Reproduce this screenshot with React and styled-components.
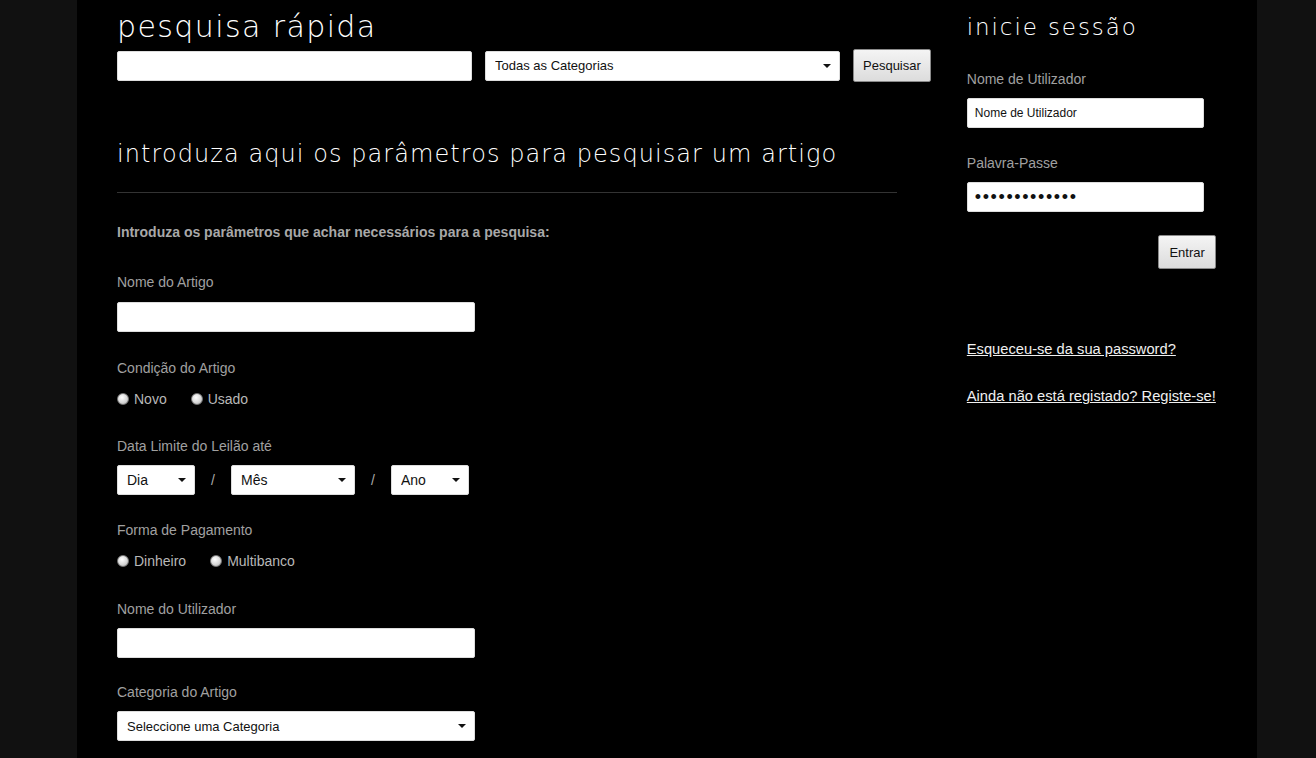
import React from "react";
import styled, { createGlobalStyle } from "styled-components";

const GlobalStyle = createGlobalStyle`
  html, body {
    margin: 0;
    padding: 0;
    background: #111111;
    overflow: hidden;
  }
  body {
    font-family: "Liberation Sans", Arial, sans-serif;
    font-size: 14px;
  }
`;

const Page = styled.div`
  width: 1180px;
  margin-left: 77px;
  min-height: 758px;
  background: #000;
  display: flex;
  padding: 0 42px 0 40px;
  box-sizing: border-box;
`;

const Main = styled.div`
  width: 814px;
`;

const Side = styled.div`
  margin-left: 36px;
  width: 250px;
  display: flex;
  flex-direction: column;
`;

const Title = styled.h1`
  margin: ${(p) => p.$mt || 0}px 0 0;
  font-family: "DejaVu Sans", sans-serif;
  font-weight: 200;
  font-size: ${(p) => p.$size || 30}px;
  letter-spacing: ${(p) => p.$ls || 0}px;
  line-height: 1;
  color: #fff;
  white-space: nowrap;
`;

const SearchRow = styled.div`
  display: flex;
  align-items: center;
  gap: 13px;
  margin-top: 7px;
`;

const TextInput = styled.input`
  width: ${(p) => p.$w || 358}px;
  height: 30px;
  box-sizing: border-box;
  border: 1px solid #ddd;
  border-radius: 2px;
  background: #fff;
  padding: 0 7px;
  font-family: "Liberation Sans", Arial, sans-serif;
  font-size: 12px;
  color: #111;
  outline: none;
  &::placeholder {
    color: #111;
  }
  &[type="password"] {
    font-size: 18px;
    letter-spacing: 1.6px;
  }
`;

const SelectWrap = styled.div`
  position: relative;
  width: ${(p) => p.$w}px;
  height: 30px;
  &::after {
    content: "";
    position: absolute;
    right: 9px;
    top: 13px;
    border-left: 4px solid transparent;
    border-right: 4px solid transparent;
    border-top: 4px solid #111;
    pointer-events: none;
  }
`;

const Select = styled.select`
  appearance: none;
  width: 100%;
  height: 100%;
  box-sizing: border-box;
  border: 1px solid #ddd;
  border-radius: 2px;
  background: #fff;
  padding: 0 0 0 9px;
  font-family: "Liberation Sans", Arial, sans-serif;
  font-size: ${(p) => p.$fs || 13}px;
  color: #111;
  outline: none;
`;

const Button = styled.button`
  height: ${(p) => p.$h || 33}px;
  padding: 0 ${(p) => p.$px || 9}px;
  border: 1px solid #8a8a8a;
  border-radius: 2px;
  background: linear-gradient(#f4f4f4, #dcdcdc);
  font-family: "Liberation Sans", Arial, sans-serif;
  font-size: 13px;
  color: #111;
  cursor: pointer;
`;

const Rule = styled.hr`
  width: 780px;
  margin: 26px 0 0;
  border: 0;
  border-top: 1px solid #333;
`;

const Intro = styled.p`
  margin: 31px 0 0;
  font-weight: bold;
  font-size: 14px;
  color: #a8a8a8;
`;

const Field = styled.div`
  margin-top: ${(p) => p.$mt || 34}px;
`;

const Label = styled.div`
  font-size: 14px;
  color: #a0a0a0;
  line-height: 16px;
  margin-bottom: ${(p) => (p.$mb === undefined ? 12 : p.$mb)}px;
`;

const RadioRow = styled.div`
  display: flex;
  gap: 24px;
  margin-top: 15px;
`;

const RadioLabel = styled.label`
  display: flex;
  align-items: center;
  gap: 5px;
  font-size: 14px;
  color: #b8b8b8;
  line-height: 16px;
`;

const Radio = styled.input.attrs({ type: "radio" })`
  appearance: none;
  margin: 0;
  width: 12px;
  height: 12px;
  border-radius: 50%;
  border: 1px solid #777;
  background: radial-gradient(circle at 40% 35%, #ffffff, #d8d8d8 55%, #a8a8a8);
  box-sizing: border-box;
`;

const DateRow = styled.div`
  display: flex;
  align-items: center;
`;

const Slash = styled.span`
  width: 36px;
  text-align: center;
  color: #aaa;
  font-size: 14px;
`;

const SideLabel = styled(Label)`
  margin-bottom: 11px;
`;

const LoginField = styled.div`
  margin-top: ${(p) => p.$mt}px;
`;

const ButtonRow = styled.div`
  display: flex;
  justify-content: flex-end;
  margin-top: 23px;
`;

const SideLink = styled.a`
  margin-top: ${(p) => p.$mt}px;
  color: #f0f0f0;
  font-size: 14.7px;
  line-height: 17px;
  text-decoration: underline;
  cursor: pointer;
  white-space: nowrap;
`;

export default function App() {
  return (
    <>
      <GlobalStyle />
      <Page>
        <Main>
          <Title $mt={12} $size={30} $ls={1.4}>pesquisa rápida</Title>
          <SearchRow>
            <TextInput $w={355} />
            <SelectWrap $w={355}>
              <Select>
                <option>Todas as Categorias</option>
              </Select>
            </SelectWrap>
            <Button>Pesquisar</Button>
          </SearchRow>

          <Title $mt={60} $size={24} $ls={1.07}>
            introduza aqui os parâmetros para pesquisar um artigo
          </Title>
          <Rule />
          <Intro>Introduza os parâmetros que achar necessários para a pesquisa:</Intro>

          <Field $mt={34}>
            <Label>Nome do Artigo</Label>
            <TextInput />
          </Field>

          <Field $mt={28}>
            <Label $mb={0}>Condição do Artigo</Label>
            <RadioRow>
              <RadioLabel>
                <Radio name="cond" /> Novo
              </RadioLabel>
              <RadioLabel>
                <Radio name="cond" /> Usado
              </RadioLabel>
            </RadioRow>
          </Field>

          <Field $mt={31}>
            <Label $mb={11}>Data Limite do Leilão até</Label>
            <DateRow>
              <SelectWrap $w={78}>
                <Select $fs={14}>
                  <option>Dia</option>
                </Select>
              </SelectWrap>
              <Slash>/</Slash>
              <SelectWrap $w={124}>
                <Select $fs={14}>
                  <option>Mês</option>
                </Select>
              </SelectWrap>
              <Slash>/</Slash>
              <SelectWrap $w={78}>
                <Select $fs={14}>
                  <option>Ano</option>
                </Select>
              </SelectWrap>
            </DateRow>
          </Field>

          <Field $mt={27}>
            <Label $mb={0}>Forma de Pagamento</Label>
            <RadioRow>
              <RadioLabel>
                <Radio name="pag" /> Dinheiro
              </RadioLabel>
              <RadioLabel>
                <Radio name="pag" /> Multibanco
              </RadioLabel>
            </RadioRow>
          </Field>

          <Field $mt={32}>
            <Label $mb={11}>Nome do Utilizador</Label>
            <TextInput />
          </Field>

          <Field $mt={26}>
            <Label $mb={11}>Categoria do Artigo</Label>
            <SelectWrap $w={358}>
              <Select>
                <option>Seleccione uma Categoria</option>
              </Select>
            </SelectWrap>
          </Field>
        </Main>

        <Side>
          <Title $mt={16} $size={23} $ls={1.9}>inicie sessão</Title>
          <LoginField $mt={32}>
            <SideLabel>Nome de Utilizador</SideLabel>
            <TextInput $w={237} placeholder="Nome de Utilizador" />
          </LoginField>
          <LoginField $mt={27}>
            <SideLabel>Palavra-Passe</SideLabel>
            <TextInput $w={237} type="password" defaultValue="aaaaaaaaaaaaa" />
          </LoginField>
          <ButtonRow>
            <Button $h={34} $px={10}>Entrar</Button>
          </ButtonRow>
          <SideLink $mt={72}>Esqueceu-se da sua password?</SideLink>
          <SideLink $mt={30}>Ainda não está registado? Registe-se!</SideLink>
        </Side>
      </Page>
    </>
  );
}
